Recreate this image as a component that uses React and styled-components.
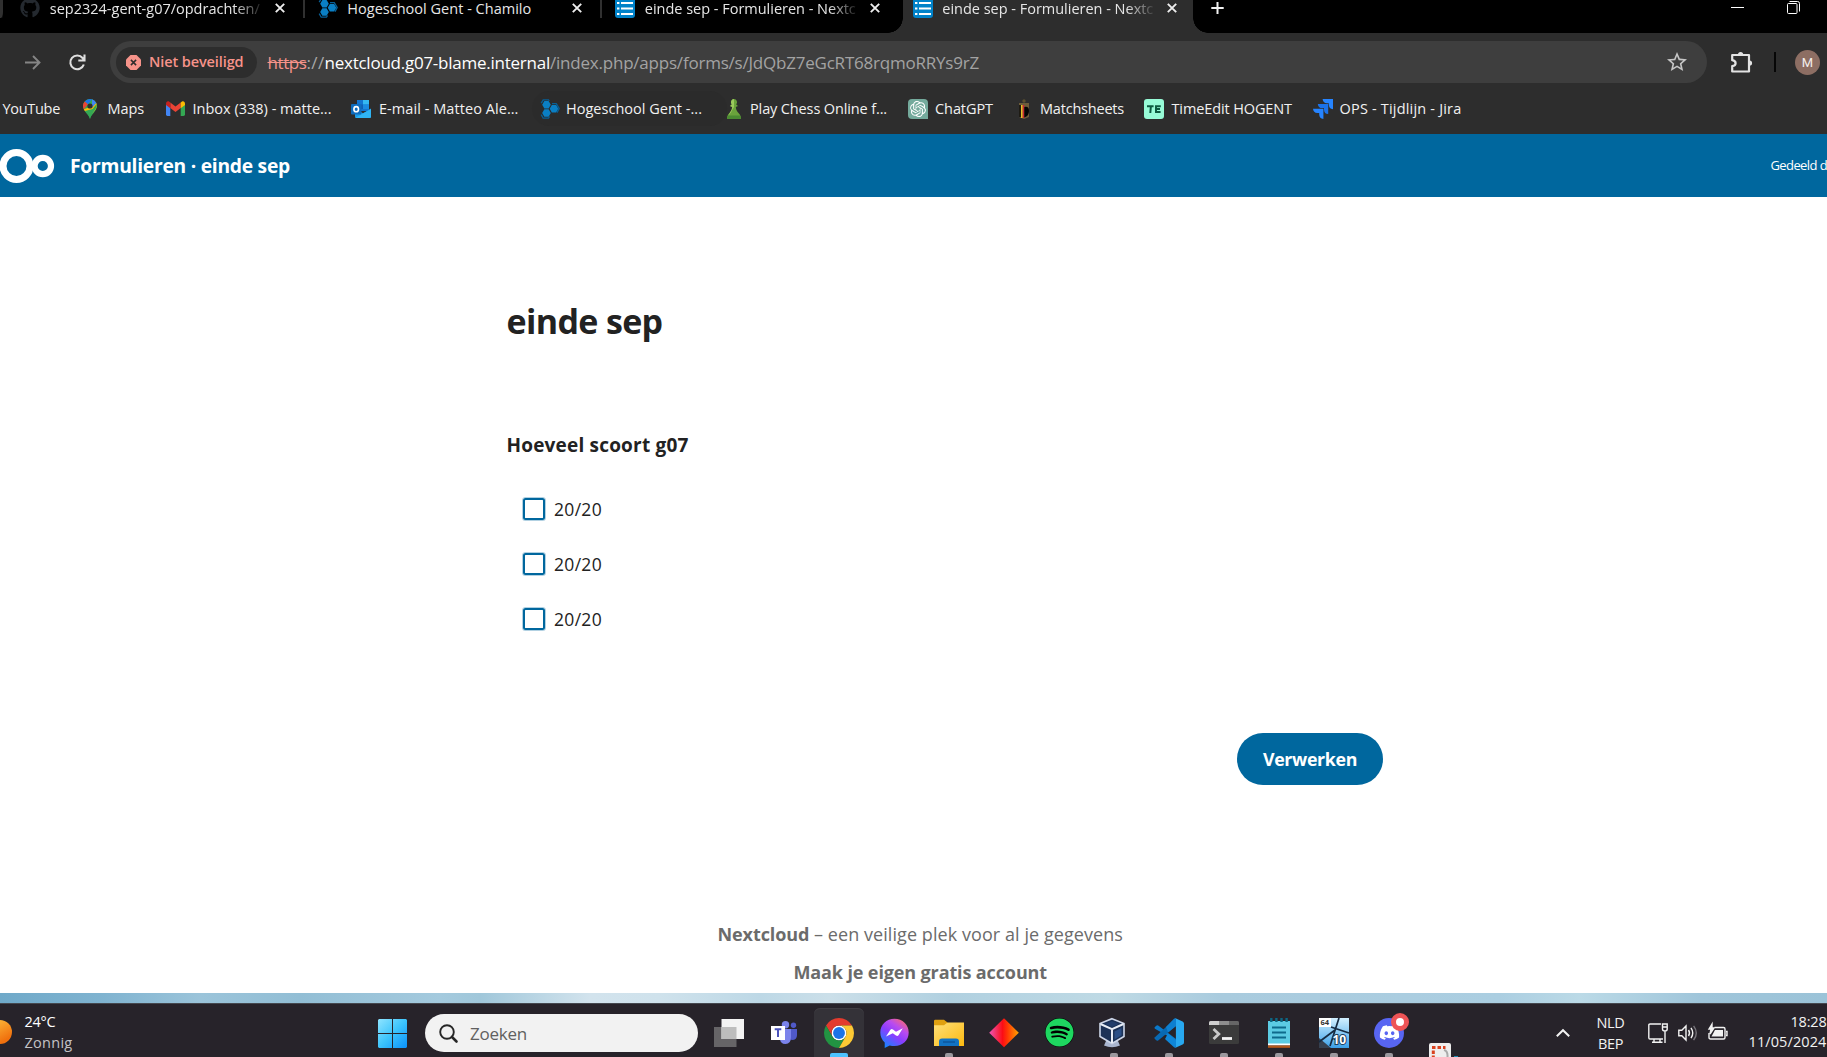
import React, { useLayoutEffect, useRef, useState } from "react";
import styled, { createGlobalStyle } from "styled-components";
import { FaGithub, FaSpotify, FaDiscord } from "react-icons/fa";
import { SiOpenai } from "react-icons/si";
import { MdStarBorder } from "react-icons/md";

const Global = createGlobalStyle`
  * { box-sizing: border-box; }
  body { margin: 0; overflow: hidden; background: #fff; }
  svg { display: block; flex: none; overflow: visible; }
`;

const Screen = styled.div`
  width: 1827px;
  height: 1057px;
  overflow: hidden;
  display: flex;
  flex-direction: column;
  font-family: "Open Sans", "Noto Sans", sans-serif;
`;

/* A single line of text whose tracking is adjusted to fill a given width. */
const Line = styled.span`
  display: block;
  flex: none;
  width: ${(p) => p.$w}px;
  font-size: ${(p) => p.$size || 14.5}px;
  line-height: ${(p) => p.$lh || 20}px;
  font-weight: ${(p) => (p.$bold ? 700 : p.$semi ? 600 : 400)};
  color: ${(p) => p.$color || "inherit"};
  text-decoration: ${(p) => (p.$strike ? "line-through" : "none")};
  white-space: pre;
`;

function Fit({ w, size, lh, bold, semi, color, strike, children }) {
  const ref = useRef(null);
  const [track, setTrack] = useState(0);
  useLayoutEffect(() => {
    const range = document.createRange();
    range.selectNodeContents(ref.current);
    const natural = range.getBoundingClientRect().width;
    setTrack((w - natural) / children.length);
  }, [w, children]);
  return (
    <Line ref={ref} $w={w} $size={size} $lh={lh} $bold={bold} $semi={semi} $color={color} $strike={strike}
      style={{ letterSpacing: track }}>
      {children}
    </Line>
  );
}

/* ---------- tab strip ---------- */
const TabStrip = styled.div`
  height: 33px;
  flex: none;
  display: flex;
  background: #000;
  color: #e6e6e6;
`;
const StripStart = styled.div`
  width: 7px;
  height: 18px;
  flex: none;
  border-right: 4px solid #000;
  border-bottom-right-radius: 6px;
  background: #303030;
`;
const Tab = styled.div`
  position: relative;
  width: 297.5px;
  flex: none;
  height: 33px;
  display: flex;
  align-items: flex-start;
  background: ${(p) => (p.$active ? "#2d2d2d" : "#000")};
  padding-left: 13.3px;
  ${(p) => p.$active && "width: 289.5px; margin-left: 3.5px; padding-left: 9.8px;"}
`;
const TabIcon = styled.div`
  width: 29.5px;
  flex: none;
  height: 18px;
`;
const TabTitle = styled.div`
  width: 212px;
  margin-right: 13px;
  padding-bottom: 6px;
  flex: none;
  mask-image: ${(p) => (p.$fade ? "linear-gradient(90deg,#000 184px,rgba(0,0,0,.12) 211px)" : "none")};
`;
const CloseBox = styled.div`
  padding-top: 3px;
`;
const TabEdge = styled.div`
  width: 2px;
  height: 18px;
  background: #303030;
  margin-left: auto;
`;
const Flare = styled.div`
  position: absolute;
  bottom: 0;
  width: 15px;
  height: 15px;
  ${(p) => (p.$left ? "left: -15px;" : "right: -15px;")}
  background: radial-gradient(circle at ${(p) => (p.$left ? "0 0" : "100% 0")}, #000 14.5px, #2d2d2d 15px);
`;
const NewTab = styled.div`
  margin-left: 18px;
  padding-top: 2px;
`;
const WindowButtons = styled.div`
  margin-left: auto;
  margin-right: 27px;
  display: flex;
  gap: 43px;
`;

/* ---------- address bar ---------- */
const AddressRow = styled.div`
  height: 58px;
  flex: none;
  display: flex;
  align-items: center;
  background: #2d2d2d;
  padding: 0 7px 0 24.5px;
`;
const Omnibox = styled.div`
  margin: 0 22px 0 24px;
  width: 1597px;
  flex: none;
  height: 42px;
  border-radius: 21px;
  background: #3e3e3e;
  display: flex;
  align-items: center;
  padding: 0 20px 0 6px;
`;
const Chip = styled.div`
  width: 141px;
  height: 31px;
  border-radius: 16px;
  background: #2d2d2d;
  display: flex;
  align-items: center;
  gap: 8px;
  padding-left: 10px;
  margin-right: 10.5px;
`;
const Address = styled.div`
  display: flex;
  flex: 1;
  padding-top: 1px;
`;
const Divider = styled.div`
  width: 2px;
  height: 20px;
  background: #060606;
  margin: 0 19px 0 21px;
`;
const Avatar = styled.div`
  width: 25px;
  height: 25px;
  border-radius: 50%;
  background: #8d6e63;
  color: #f4eeec;
  font: 400 13px/25px Roboto, sans-serif;
  text-align: center;
`;

/* ---------- bookmarks ---------- */
const BookmarkBar = styled.div`
  height: 43px;
  flex: none;
  background: #2d2d2d;
  color: #f1f1f1;
  display: flex;
  padding-left: 2.5px;
`;
const Bookmark = styled.div`
  display: flex;
  align-items: center;
  height: 35px;
  flex: none;
  width: ${(p) => p.$w}px;
  ${(p) => p.$hover && "background: #2b2b2b; border-radius: 18px; margin-left: -8px; padding-left: 8px;"}
`;
const BookmarkIcon = styled.div`
  width: ${(p) => p.$w}px;
  flex: none;
`;

/* ---------- Nextcloud page ---------- */
const Header = styled.header`
  height: 63px;
  flex: none;
  display: flex;
  align-items: center;
  background: #00679e;
  color: #fff;
  overflow: hidden;
`;
const HeaderTitle = styled.div`
  margin-left: 15px;
  flex: 1;
`;
const HeaderNote = styled.div`
  padding-bottom: 2px;
`;
const Page = styled.main`
  height: 796px;
  flex: none;
  background: #fff;
  color: #222;
  padding: 103px 444px 0 506.5px;
  display: flex;
  flex-direction: column;
`;
const Heading = styled.div`
  height: 42px;
  display: flex;
  align-items: center;
`;
const Question = styled.div`
  margin-top: 93px;
`;
const Options = styled.div`
  margin-top: 26px;
  padding-left: 16.5px;
`;
const Option = styled.label`
  height: 55px;
  display: flex;
  align-items: center;
  gap: 9px;
`;
const Checkbox = styled.span`
  width: 22px;
  height: 22px;
  border: 2px solid #00679e;
  border-radius: 2.5px;
  box-shadow: 0 0 0 1px rgba(0, 103, 158, 0.3);
`;
const Submit = styled.button`
  align-self: flex-end;
  margin: 87px 0 0;
  width: 146px;
  height: 52px;
  border: 0;
  border-radius: 26px;
  background: #00679e;
  color: #fff;
  display: flex;
  align-items: center;
  justify-content: center;
  padding: 0;
  font-family: inherit;
`;
const Footer = styled.footer`
  margin: 139px 0 0 -506.5px;
  width: 1827px;
  color: #6b6b6b;
  display: flex;
  flex-direction: column;
  gap: 18px;
  padding-left: 717.5px;
`;
const FooterLine = styled.div`
  display: flex;
  padding-left: ${(p) => p.$indent || 0}px;
`;

/* ---------- desktop and taskbar ---------- */
const Wallpaper = styled.div`
  height: 10px;
  flex: none;
  background: linear-gradient(90deg, #6fa9c9 0, #7fb3d0 100px, #9bc4da 200px, #92bed5 300px, #a4cade 440px,
    #a0c7da 480px, #d2e3ed 590px, #cfe2ec 660px, #bdd8e6 760px, #cbdfe9 830px, #b0d0e0 950px, #bfdae5 1110px,
    #a9cbde 1220px, #abcee1 1500px, #bbdae7 1580px, #9fc5da 1700px, #9bc3d8 1827px);
`;
const Taskbar = styled.div`
  height: 54px;
  flex: none;
  background: #27232a;
  border-top: 1px solid #45484f;
  display: flex;
`;
const Weather = styled.div`
  width: 378px;
  flex: none;
  display: flex;
  gap: 12.5px;
`;
const Sun = styled.div`
  width: 12px;
  height: 24px;
  margin-top: 16px;
  border-radius: 0 12px 12px 0;
  background: linear-gradient(150deg, #fbb034, #f0700d 75%);
`;
const Start = styled.div`
  padding-top: 15px;
  width: 47px;
  flex: none;
`;
const Search = styled.div`
  margin-top: 10px;
  width: 273px;
  height: 38px;
  border-radius: 19px;
  background: #f2f2f2;
  color: #606060;
  display: flex;
  align-items: center;
  padding: 1px 0 0 14px;
  gap: 12px;
  flex: none;
`;
const Apps = styled.div`
  display: flex;
  margin-left: 3.5px;
  width: 845px;
  flex: none;
`;
const AppSlot = styled.div`
  width: 55px;
  flex: none;
  height: 53px;
  padding-top: 4px;
`;
const AppButton = styled.div`
  width: 50px;
  height: 49px;
  margin: 0 auto;
  border-radius: 6px 6px 0 0;
  display: flex;
  flex-direction: column;
  align-items: center;
  background: ${(p) => (p.$on ? "#343238" : "transparent")};
  box-shadow: ${(p) => (p.$on ? "inset 0 1px #3f3d43" : "none")};
`;
const IconBox = styled.div`
  position: relative;
  height: 45px;
  padding-top: 4px;
  margin-left: ${(p) => p.$nudge || 0}px;
  display: flex;
  align-items: center;
`;
const Running = styled.div`
  width: ${(p) => (p.$on ? 18 : 8)}px;
  height: 4px;
  border-radius: 2px 2px 0 0;
  background: ${(p) => (p.$on ? "#4cc2ff" : "#9c989e")};
`;
const Alert = styled.div`
  position: absolute;
  top: 5px;
  right: -5px;
  width: 18px;
  height: 18px;
  border-radius: 50%;
  border: 5px solid #ee5456;
  background: #fff;
`;
const Snip = styled.div`
  padding-top: 39px;
`;
const Tray = styled.div`
  display: flex;
  flex: 1;
  color: #f2f2f2;
  padding-right: 1.5px;
`;
const TrayIcon = styled.div`
  padding-top: ${(p) => p.$top}px;
  margin-right: ${(p) => p.$after}px;
  flex: none;
`;
const Stack = styled.div`
  padding-top: ${(p) => p.$top || 8}px;
  flex: none;
  display: flex;
  flex-direction: column;
  align-items: ${(p) => p.$align || "flex-start"};
  margin-right: ${(p) => p.$after || 0}px;
`;

/* ---------- drawings ---------- */
const Cross = () => (
  <svg width="10" height="10" viewBox="0 0 10 10"><path d="M.8.8 9.2 9.2M9.2.8.8 9.2" stroke="#eee" strokeWidth="1.9" /></svg>
);
const FormsIcon = () => (
  <svg width="20" height="18" viewBox="0 0 20 18">
    <path d="M0 0H20V15Q20 18 17 18H3Q0 18 0 15Z" fill="#0082c9" />
    <path d="M6 3H18M6 8.5H18M6 14H18" stroke="#fff" strokeWidth="2" />
    <path d="M2 3H4.4M2 8.5H4.4M2 14H4.4" stroke="#fff" strokeWidth="2.2" />
  </svg>
);
const hex = (x, y, r) =>
  [0, 60, 120, 180, 240, 300].map((a) => `${x + r * Math.cos((a * Math.PI) / 180)},${y + r * Math.sin((a * Math.PI) / 180)}`).join(" ");
const Chamilo = () => (
  <svg width="20" height="20" viewBox="0 0 20 20">
    <g fill="#0a7fc4">
      <polygon points={hex(6.5, 5.8, 4.3)} />
      <polygon points={hex(6.5, 14, 4.3)} />
      <polygon points={hex(14, 9.8, 4.3)} />
    </g>
    <path d="M1.2 4.2 3.2.8H8.5L9.3 2M12 4.6H16.3L19.2 9.4 17 13.6M1.2 15.6 3.2 19.2H8.5L9.6 17.5" fill="none" stroke="#075f96" strokeWidth="1.3" />
  </svg>
);
const Puzzle = () => (
  <svg width="24" height="24" viewBox="0 0 24 24">
    <path d="M3.200 5H20V21.500H3.200V16.200Q6.600 15.600 6.600 13.200 6.600 10.800 3.200 10.200Z" fill="none" stroke="#e3e3e3" strokeWidth="2.200" strokeLinejoin="round" />
    <path d="M9 4.500A2.600 2.600 0 0 1 14.200 4.500ZM20.500 10.400A2.500 2.500 0 0 1 20.500 15.600Z" fill="#e3e3e3" />
  </svg>
);
const MapsPin = () => (
  <svg width="14" height="20" viewBox="0 0 14 20">
    <path d="M7 20C6 15.5 0 12 0 7A7 7 0 0 1 14 7C14 12 8 15.5 7 20Z" fill="#34a853" />
    <path d="M1.7 2.5A7 7 0 0 1 9 .3L4.8 5.4Z" fill="#1a73e8" />
    <path d="M1.7 2.5A7 7 0 0 0 .8 10.2L5 5.2Z" fill="#ea4335" />
    <path d="M9 .3A7 7 0 0 1 13.3 4L9 9Z" fill="#4285f4" />
    <path d="M13.3 4C15 9 11 12.5 9.5 14.2L1.8 12 .8 10.2 5 8.8 9 8.8Z" fill="#fbbc04" />
    <path d="M13.6 5C14.8 9.5 8.2 14 7 20 6 15.5 3.2 14 1.8 12L9.5 10Z" fill="#34a853" />
    <circle cx="7" cy="7" r="2.6" fill="#2d2d2d" />
  </svg>
);
const Gmail = () => (
  <svg width="19" height="15" viewBox="0 0 19 15">
    <path d="M0 3V13.6Q0 15 1.4 15H4.3V6Z" fill="#4285f4" />
    <path d="M19 3V13.6Q19 15 17.6 15H14.7V6Z" fill="#34a853" />
    <path d="M4.3 1.4V7L9.5 11 14.7 7V1.4L9.5 5.4Z" fill="#ea4335" />
    <path d="M0 2.6V4L4.3 7.2V1.4L3 .5C1.6-.4 0 .7 0 2.6Z" fill="#c5221f" />
    <path d="M19 2.6V4L14.7 7.2V1.4L16 .5C17.4-.4 19 .7 19 2.6Z" fill="#fbbc04" />
  </svg>
);
const Outlook = () => (
  <svg width="20" height="18" viewBox="0 0 20 18">
    <path d="M6 0H18V11H6Z" fill="#1374cf" />
    <path d="M12 0H18V4.5H12Z" fill="#35b8f1" /><path d="M12 4.5H18V9H12Z" fill="#1b8be0" /><path d="M6 4.5H12V9H6Z" fill="#0f5fb4" />
    <path d="M4 8.5 12 13.2 20 8.5V16.5Q20 18 18.5 18H5.5Q4 18 4 16.5Z" fill="#1a9ceb" />
    <path d="M4 18 20 9V16.5Q20 18 18.5 18Z" fill="#2fb4f4" />
    <rect y="4" width="10.4" height="10.4" rx="1" fill="#0f6cbd" />
    <ellipse cx="5.2" cy="9.2" rx="2.3" ry="2.6" fill="none" stroke="#fff" strokeWidth="1.6" />
  </svg>
);
const Pawn = () => (
  <svg width="14" height="20" viewBox="0 0 14 20">
    <path d="M7 0A3.3 3.3 0 0 1 9.2 5.5L11 7 8.8 8C9 11.5 10.5 13 12.4 15 14 17 14 20 14 20H0S0 17 1.6 15C3.5 13 5 11.5 5.2 8L3 7 4.8 5.5A3.3 3.3 0 0 1 7 0Z" fill="#6aa33c" />
    <path d="M3 7 4.8 5.5A3.3 3.3 0 0 1 7 0V8L5.2 11 4 13.5 1 17C2.5 13.6 5 11.5 5.2 8Z" fill="#9cc95d" />
    <path d="M0 20S0 18 .8 16.4H13.2C14 18 14 20 14 20Z" fill="#4b8b32" />
  </svg>
);
const GptTile = styled.div`
  width: 20px;
  height: 20px;
  border-radius: 4px 4px 0 4px;
  background: #74aa9c;
  color: #fff;
  display: grid;
  place-items: center;
`;
const Crest = () => (
  <svg width="12" height="20" viewBox="0 0 12 20">
    <circle cx="6" cy="2" r="1.7" fill="#5b5030" />
    <path d="M1 4H11V18L6 20 1 18Z" fill="#6d5c3a" />
    <path d="M1.200 6H4V18H1.200Z" fill="#0b0b0b" /><path d="M2.900 6H4.700V19H2.900Z" fill="#e8bf2a" /><path d="M4.700 6H6.300V19H4.700Z" fill="#cc2830" />
    <path d="M6.300 8Q11 7 11 12T6.300 18.500Z" fill="#050505" />
  </svg>
);
const TimeEdit = () => (
  <svg width="20" height="20" viewBox="0 0 20 20">
    <rect width="20" height="20" rx="3" fill="#97fbd7" />
    <path d="M3 7.200H9.600M6.900 7.200 6.300 14M16.800 7.200H12V13H16.600M12 10.100H16" fill="none" stroke="#0c5b40" strokeWidth="2" />
  </svg>
);
const Jira = () => (
  <svg width="20" height="20" viewBox="0 0 20 20">
    <path d="M9.6 0H20V10.2A4.6 4.6 0 0 1 15.8 5.8V4.2H14A4.6 4.6 0 0 1 9.6 0Z" fill="#2684ff" />
    <path d="M4.8 4.9H15.2V15.1A4.6 4.6 0 0 1 11 10.7V9.1H9.2A4.6 4.6 0 0 1 4.8 4.9Z" fill="#1b72ea" />
    <path d="M0 9.8H10.4V20A4.6 4.6 0 0 1 6.2 15.6V14H4.4A4.6 4.6 0 0 1 0 9.8Z" fill="#2684ff" />
  </svg>
);
const Chrome = () => (
  <svg width="30" height="30" viewBox="0 0 48 48">
    <circle cx="24" cy="24" r="12" fill="#fff" />
    <path d="M24 12H44.78A24 24 0 0 0 3.216 12L13.61 30A12 12 0 0 1 24 12Z" fill="#e33b2e" />
    <path d="M13.61 30 3.218 12A24 24 0 0 0 24 48L34.39 30A12 12 0 0 1 13.61 30Z" fill="#229342" />
    <path d="M34.39 30 24 48A24 24 0 0 0 44.78 12H24A12 12 0 0 1 34.39 30Z" fill="#fcc934" />
    <circle cx="24" cy="24" r="9.5" fill="#1a73e8" />
  </svg>
);
const Messenger = () => (
  <svg width="29" height="30" viewBox="0 0 29 30">
    <defs><linearGradient id="msg" x1=".15" y1="1" x2=".85" y2="0">
      <stop offset="0" stopColor="#0a8bff" /><stop offset=".45" stopColor="#8b3dff" /><stop offset=".7" stopColor="#b94bf0" /><stop offset="1" stopColor="#ff6a68" />
    </linearGradient></defs>
    <path d="M14.5.8C6.4.8.3 6.7.3 14.5c0 4 1.7 7.6 4.4 10V30l5-2.6c1.5.5 3.100.7 4.800.7 8.100 0 14.200-5.800 14.200-13.600S22.600.8 14.500.8Z" fill="url(#msg)" />
    <path d="M6 18.600 10.400 11.700Q11.500 10.300 13 11.400L16 13.800 22.800 10.300 18.500 17.300Q17.500 18.700 16 17.600L12.800 15.200Z" fill="#fff" />
  </svg>
);
const Folder = () => (
  <svg width="30" height="28" viewBox="0 0 30 28">
    <defs><linearGradient id="fold" x1="0" y1="0" x2="1" y2="1"><stop offset="0" stopColor="#ffe07a" /><stop offset="1" stopColor="#fcb90f" /></linearGradient></defs>
    <path d="M0 2Q0 .8 1.200.8H10L13.500 3.500V9H0Z" fill="#e0a010" />
    <path d="M0 6.200H10L13.500 3.400H30V27H0Z" fill="url(#fold)" />
    <path d="M5 27V22.500Q5 19.500 8 19.500H22Q25 19.500 25 22.500V27Z" fill="#1273c4" /><path d="M9 23H21" stroke="#0b4f94" strokeWidth="1.200" />
  </svg>
);
const Diamond = () => (
  <svg width="30" height="30" viewBox="0 0 30 30">
    <defs><linearGradient id="dia"><stop offset=".05" stopColor="#ee4fa6" /><stop offset=".45" stopColor="#fb0d16" /><stop offset=".6" stopColor="#ff3305" /><stop offset="1" stopColor="#ffa400" /></linearGradient></defs>
    <path d="M15 .3 29.800 14.800 15 29.300.2 14.800Z" fill="url(#dia)" />
  </svg>
);
const SpotifyWrap = styled.div`
  border-radius: 50%;
  background: #000;
  color: #1ed760;
`;
const VBox = () => (
  <svg width="26" height="29" viewBox="0 0 26 29">
    <path d="M7 23H19L21 27.500Q13 31 5 27.500Z" fill="#a9b5cf" />
    <path d="M13 .7 25 5.500V18.500L13 25.500 1 18.500V5.500Z" fill="#1c3257" stroke="#cdd6e8" strokeWidth="1.600" />
    <path d="M1.500 6 13 11.200 24.500 6M13 11V25" fill="none" stroke="#e8edf6" strokeWidth="2" />
    <path d="M13 3.300 20 6 13 8.800 6 6Z" fill="#213d6b" /><path d="M15.500 13.500 22.500 10V17.300L15.500 21.500Z" fill="#2b4f87" />
  </svg>
);
const VSCode = () => (
  <svg width="30" height="30" viewBox="0 0 30 30">
    <path d="M21.500 22.300.9 10.800Q0 9.800.9 9L2.600 7.500Q3.400 7 4.200 7.600L22 21Z" fill="#0a78c9" />
    <path d="M22 8 4.200 22.400Q3.400 23 2.600 22.500L.9 21Q0 20.200.9 19.300L21.500.3Z" fill="#0869b3" />
    <path d="M21.500.3 28.600 3.400Q30 4.200 30 5.600V24.400Q30 25.800 28.600 26.600L21.500 29.700Q20.800 30 20 29.300 21.900 30 21.900 28V2Q21.900 0 20 .7 20.800 0 21.500.3Z" fill="#28a8f0" />
    <path d="M20 .7Q22 0 22 2V8L14 14.500 12 9Z" fill="#0d7fd0" /><path d="M20 29.300Q22 30 22 28V22L14 15.500 11 21Z" fill="#0f86d8" />
  </svg>
);
const Terminal = () => (
  <svg width="30" height="23" viewBox="0 0 30 23">
    <rect width="30" height="23" rx="1.500" fill="#3b3b3b" />
    <path d="M0 4V1.500Q0 0 1.500 0H10V4Z" fill="#cfcfcf" /><path d="M10 0H20V4H10Z" fill="#8e8e8e" /><path d="M20 0H28.500Q30 0 30 1.500V4H20Z" fill="#666" />
    <path d="M4.500 8 9.800 13 4.500 18" fill="none" stroke="#c9c9c9" strokeWidth="2.800" /><path d="M13 17.500H23" stroke="#f4f4f4" strokeWidth="2.800" />
  </svg>
);
const Notepad = () => (
  <svg width="22" height="30" viewBox="0 0 22 30">
    <path d="M0 3H22V26H0Z" fill="#5ccbe3" /><path d="M0 25.500H22V27.500H0Z" fill="#fff" /><path d="M0 27.500H22V29.800H0Z" fill="#b6591b" />
    <path d="M4 9.500H18M4 14.500H18M4 19.500H18" stroke="#0e6a8c" strokeWidth="1.800" />
    <path d="M3.300 0V4M8.400 0V4M13.500 0V4M18.600 0V4" stroke="#0d6683" strokeWidth="2.400" />
  </svg>
);
const Win64 = () => (
  <svg width="30" height="30" viewBox="0 0 30 30">
    <defs><linearGradient id="aida" x1="0" y1="0" x2="0" y2="1"><stop offset="0" stopColor="#d2f0ff" /><stop offset="1" stopColor="#3ba0e8" /></linearGradient></defs>
    <path d="M0 0H30V30H0Z" fill="url(#aida)" />
    <path d="M0 20 12 30H0Z" fill="#36404f" />
    <path d="M20 0 11 28M12 9 30 15M0 24 16 12" stroke="#162b42" strokeWidth="1.700" />
    <rect width="12" height="9" fill="#fff" />
    <text x="1.500" y="7.200" fontSize="7.500" fontWeight="700" fontFamily="Open Sans" fill="#333">64</text>
    <text x="13.500" y="25.500" fontSize="12" fontWeight="700" fontFamily="Open Sans" fill="#fff" stroke="#1c3d5c" strokeWidth="2" paintOrder="stroke">10</text>
  </svg>
);
const DiscordDisc = styled.div`
  width: 30px;
  height: 30px;
  border-radius: 50%;
  background: #5865f2;
  color: #fff;
  display: grid;
  place-items: center;
`;
const Teams = () => (
  <svg width="26" height="23" viewBox="0 0 26 23">
    <circle cx="14.500" cy="3.700" r="3.700" fill="#7b83eb" /><circle cx="22.500" cy="4.300" r="2.700" fill="#5059c9" />
    <path d="M18 8H26V14Q26 19 21 19L18 18Z" fill="#5059c9" />
    <path d="M9 8H20V16Q20 23 14.500 23T9 17Z" fill="#7b83eb" />
    <path d="M0 5H14V19H0Z" fill="#fff" /><path d="M3.700 8.200H10.300M7 8.200V16" stroke="#4b53bc" strokeWidth="2" />
  </svg>
);
const TaskView = () => (
  <svg width="30" height="28" viewBox="0 0 30 28">
    <path d="M0 8H22.500V28H0Z" fill="#666467" /><path d="M7.500 0H30V20H7.500Z" fill="#f3f3f3" /><path d="M7.500 8H22.500V20H7.500Z" fill="#bdbdbd" />
  </svg>
);

/* ---------- data ---------- */
const tabs = [
  { text: "sep2324-gent-g07/opdrachten/", w: 210, fade: true, icon: <FaGithub size={20} color="#24292f" style={{ marginTop: -2 }} /> },
  { text: "Hogeschool Gent - Chamilo", w: 184, icon: <svg width="20" height="18" viewBox="0 2 20 18"><Chamilo /></svg> },
  { text: "einde sep - Formulieren - Nextc", w: 211, fade: true, icon: <FormsIcon /> },
  { text: "einde sep - Formulieren - Nextc", w: 211, fade: true, icon: <FormsIcon />, active: true },
];
const bookmarks = [
  { text: "YouTube", w: 57.5, slot: 80 },
  { text: "Maps", w: 36.5, slot: 83, icon: <MapsPin />, iw: 25 },
  { text: "Inbox (338) - matte...", w: 139, slot: 185.500, icon: <Gmail />, iw: 27 },
  { text: "E-mail - Matteo Ale...", w: 139.5, slot: 188.5, icon: <Outlook />, iw: 28 },
  { text: "Hogeschool Gent -...", w: 136, slot: 187, icon: <Chamilo />, iw: 26.500, hover: true },
  { text: "Play Chess Online f...", w: 137, slot: 181.500, icon: <Pawn />, iw: 23.500 },
  { text: "ChatGPT", w: 58, slot: 109.500, icon: <GptTile><SiOpenai size={16} /></GptTile>, iw: 27 },
  { text: "Matchsheets", w: 84, slot: 126.500, icon: <Crest />, iw: 22.500 },
  { text: "TimeEdit HOGENT", w: 120.5, slot: 169, icon: <TimeEdit />, iw: 27.500 },
  { text: "OPS - Tijdlijn - Jira", w: 122, slot: 150, icon: <Jira />, iw: 26.5 },
];
const apps = [
  { icon: <TaskView /> },
  { icon: <Teams /> },
  { icon: <Chrome />, on: true, run: true },
  { icon: <Messenger /> },
  { icon: <Folder />, run: true },
  { icon: <Diamond /> },
  { icon: <SpotifyWrap><FaSpotify size={29} /></SpotifyWrap> },
  { icon: <VBox />, run: true, nudge: -4 },
  { icon: <VSCode />, run: true },
  { icon: <Terminal />, run: true },
  { icon: <Notepad />, run: true },
  { icon: <Win64 />, run: true },
  { icon: <DiscordDisc><FaDiscord size={21} /></DiscordDisc>, run: true, alert: true },
];

export default function App() {
  return (
    <Screen>
      <Global />
      <TabStrip>
        <StripStart />
        {tabs.map((t, i) => (
          <Tab key={i} $active={t.active}>
            {t.active && <Flare $left />}
            <TabIcon>{t.icon}</TabIcon>
            <TabTitle $fade={t.fade}><Fit w={t.w} lh={17}>{t.text}</Fit></TabTitle>
            <CloseBox><Cross /></CloseBox>
            {i < 2 && <TabEdge />}
            {t.active && <Flare />}
          </Tab>
        ))}
        <NewTab>
          <svg width="13" height="12" viewBox="0 0 13 12"><path d="M6.500 0V12M.3 6H12.700" stroke="#f2f2f2" strokeWidth="2" /></svg>
        </NewTab>
        <WindowButtons>
          <svg width="13" height="15"><path d="M0 7.500H13" stroke="#fff" strokeWidth="1" /></svg>
          <svg width="13" height="15" viewBox="0 0 13 15" fill="none" stroke="#fff">
            <rect x=".5" y="3.500" width="9.500" height="10" rx="1" /><path d="M2.500 1.500H10.500Q12.500 1.500 12.500 3.500V11.500" />
          </svg>
        </WindowButtons>
      </TabStrip>

      <AddressRow>
        <svg width="16" height="15" viewBox="0 0 16 15" fill="none" stroke="#858585" strokeWidth="1.900"><path d="M0 7.500H14M8 1 14.500 7.500 8 14" /></svg>
        <svg width="17" height="17" viewBox="0 0 17 17" fill="none" stroke="#dedede" strokeWidth="2.100" style={{ marginLeft: 28.5 }}>
          <path d="M14.800 10.500A6.900 6.900 0 1 1 13.600 4L15 5.800M15.500.5V6.500H9.300" />
        </svg>
        <Omnibox>
          <Chip>
            <svg width="15" height="15" viewBox="0 0 15 15"><path d="M4.500 0H10.500L15 4.500V10.500L10.500 15H4.500L0 10.500V4.500Z" fill="#f6938a" /><path d="M4.900 4.900 10.100 10.100M10.100 4.900 4.900 10.100" stroke="#2d2d2d" strokeWidth="1.500" /></svg>
            <Fit w={94.500} size={14.500} semi color="#f6938a">Niet beveiligd</Fit>
          </Chip>
          <Address>
            <Fit w={39} size={17} color="#f6938a" strike>https</Fit>
            <Fit w={18} size={17} color="#a9a9a9">://</Fit>
            <Fit w={225.500} size={17} color="#fff">nextcloud.g07-blame.internal</Fit>
            <Fit w={429} size={17} color="#a3a3a3">/index.php/apps/forms/s/JdQbZ7eGcRT68rqmoRRYs9rZ</Fit>
          </Address>
          <MdStarBorder size={24} color="#c6c6c6" style={{ marginRight: -2 }} />
        </Omnibox>
        <Puzzle />
        <Divider />
        <Avatar>M</Avatar>
      </AddressRow>

      <BookmarkBar>
        {bookmarks.map((b) => (
          <Bookmark key={b.text} $w={b.slot + (b.hover ? 8 : 0)} $hover={b.hover}>
            {b.icon && <BookmarkIcon $w={b.iw}>{b.icon}</BookmarkIcon>}
            <Fit w={b.w}>{b.text}</Fit>
          </Bookmark>
        ))}
      </BookmarkBar>

      <Header>
        <svg width="55" height="36" viewBox="0 0 55 36" fill="none" stroke="#fff">
          <circle cx="16.500" cy="18" r="13.500" strokeWidth="7" /><circle cx="42.800" cy="18" r="8.200" strokeWidth="6.200" />
        </svg>
        <HeaderTitle><Fit w={220} size={19.300} bold>Formulieren · einde sep</Fit></HeaderTitle>
        <HeaderNote><Fit w={56.500} size={13}>Gedeeld d</Fit></HeaderNote>
      </Header>

      <Page>
        <Heading><Fit w={156} size={34} bold>einde sep</Fit></Heading>
        <Question><Fit w={182} size={19} bold>Hoeveel scoort g07</Fit></Question>
        <Options>
          {[0, 1, 2].map((n) => (
            <Option key={n}><Checkbox /><Fit w={48} size={17.500}>20/20</Fit></Option>
          ))}
        </Options>
        <Submit><Fit w={94} size={17.800} bold>Verwerken</Fit></Submit>
        <Footer>
          <FooterLine>
            <Fit w={96.500} size={18} bold>{"Nextcloud "}</Fit>
            <Fit w={309} size={18}>– een veilige plek voor al je gegevens</Fit>
          </FooterLine>
          <FooterLine $indent={76}><Fit w={253.500} size={18} bold>Maak je eigen gratis account</Fit></FooterLine>
        </Footer>
      </Page>

      <Wallpaper />
      <Taskbar>
        <Weather>
          <Sun />
          <Stack>
            <Fit w={31} size={14.500} color="#fff">24°C</Fit>
            <Fit w={48} size={14.500} lh={21} color="#c4c2c6">Zonnig</Fit>
          </Stack>
        </Weather>
        <Start>
          <svg width="29" height="29" viewBox="0 0 29 29">
            <defs><linearGradient id="win" x1="0" y1="0" x2="29" y2="29" gradientUnits="userSpaceOnUse"><stop offset="0" stopColor="#8fe4ff" /><stop offset=".5" stopColor="#3cc4fc" /><stop offset="1" stopColor="#0a90fa" /></linearGradient></defs>
            <path d="M1 0H14V14H0V1ZM15 0H28L29 1V14H15ZM0 15H14V29H1L0 28ZM15 15H29V28L28 29H15Z" fill="url(#win)" />
          </svg>
        </Start>
        <Search>
          <svg width="19" height="19" viewBox="0 0 19 19" fill="none" stroke="#262626"><circle cx="8" cy="8" r="6.800" strokeWidth="1.900" /><path d="M13 13 17.500 17.500" strokeWidth="2.600" strokeLinecap="round" /></svg>
          <Fit w={57} size={17}>Zoeken</Fit>
        </Search>
        <Apps>
          {apps.map((a, i) => (
            <AppSlot key={i}>
              <AppButton $on={a.on}>
                <IconBox $nudge={a.nudge}>{a.icon}{a.alert && <Alert />}</IconBox>
                {a.run && <Running $on={a.on} />}
              </AppButton>
            </AppSlot>
          ))}
          <Snip>
            <svg width="33" height="14" viewBox="0 0 33 14" style={{ marginLeft: 12 }}>
              <path d="M0 14V2Q0 0 2 0H20Q22 0 22 2V14Z" fill="#eeeeee" />
              <path d="M3 4.500H6.500M8.500 4.500H12M14 4.500H16.500M4.300 7.500V11M4.300 12.500V14" fill="none" stroke="#d9421f" strokeWidth="3" />
              <path d="M15 7Q19 8 18.500 14" fill="none" stroke="#aaa" strokeWidth="2" /><path d="M25 13H29V14H25Z" fill="#1d8db5" />
            </svg>
          </Snip>
        </Apps>
        <Tray>
          <TrayIcon $top={25} $after={26.5}>
            <svg width="14" height="8" viewBox="0 0 14 8" style={{ marginLeft: 9.5 }}><path d="M.8 7.200 7 1.200 13.200 7.200" fill="none" stroke="#f2f2f2" strokeWidth="2" /></svg>
          </TrayIcon>
          <Stack $top={9} $align="center" $after={23.5}>
            <Fit w={28} size={14.500}>NLD</Fit>
            <Fit w={25} size={14.500} lh={21}>BEP</Fit>
          </Stack>
          <TrayIcon $top={19} $after={10}>
            <svg width="20" height="20" viewBox="0 0 20 20" fill="none" stroke="#f2f2f2" strokeWidth="1.400">
              <path d="M13 1H2Q.8 1 .8 2.200V14.800Q.8 16 2 16H15M6 16V19M12 16V19M4 19.300H14.500M14.500 1H19.200V6Q19.200 8 17 8 14.500 8 14.500 6ZM14.500 4H19M17 8V20" />
            </svg>
          </TrayIcon>
          <TrayIcon $top={21} $after={10}>
            <svg width="20" height="16" viewBox="0 0 20 16" fill="none" stroke="#f2f2f2" strokeWidth="1.400">
              <path d="M.8 5.200H3.800L8 1V15L3.800 10.800H.8ZM10.500 5Q12.500 8 10.500 11M13 2.800Q16.500 8 13 13.200" /><path d="M15.600.8Q21 8 15.600 15.200" stroke="#77747a" />
            </svg>
          </TrayIcon>
          <TrayIcon $top={20} $after={20.5}>
            <svg width="20" height="16" viewBox="0 0 20 16" fill="none" stroke="#f2f2f2" strokeWidth="1.400">
              <path d="M6.500 3.500H15.500Q17 3.500 17 5V13.500Q17 15 15.500 15H2.500Q1 15 1 13.500V9" /><path d="M18 7.500H19V11.500H18" /><path d="M7 6H15V12.500H3.500Z" fill="#f2f2f2" stroke="none" /><path d="M4 0 1 5H3L2 10 6 4H4Z" fill="#f2f2f2" />
            </svg>
          </TrayIcon>
          <Stack $align="flex-end">
            <Fit w={36} size={14.500}>18:28</Fit>
            <Fit w={78} size={14.500}>11/05/2024</Fit>
          </Stack>
        </Tray>
      </Taskbar>
    </Screen>
  );
}
